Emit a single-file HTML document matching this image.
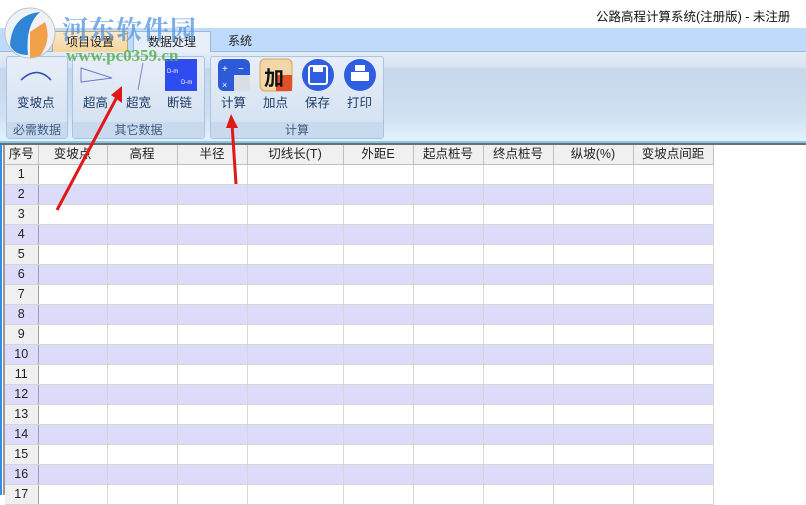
<!DOCTYPE html>
<html><head><meta charset="utf-8"><style>
*{margin:0;padding:0;box-sizing:border-box}
body{width:806px;height:495px;overflow:hidden;background:#fff;position:relative;font-family:"Liberation Sans","Noto Sans CJK SC",sans-serif;font-size:12px;color:#222}
.abs{position:absolute}
#title{left:0;top:0;width:806px;height:28px;background:#fff}
#tabs{left:0;top:28px;width:806px;height:24px;background:#bedbfc;border-bottom:1px solid #9bb8dc}
.tab{position:absolute;top:3px;height:22px;text-align:center;line-height:20px;font-size:12px}
#ribbon{left:0;top:52px;width:806px;height:91px;background:linear-gradient(#e4ecf7 0,#d8e4f3 15px,#c6d7ec 17px,#cddff0 60px,#e2f2fd 88px);border-bottom:2px solid #88c8ea}
.grp{position:absolute;top:56px;height:83px;border:1px solid #a9c4e4;border-radius:3px;background:linear-gradient(#e8eef8,#d1e0f1)}
.gl{position:absolute;left:0;right:0;bottom:0;height:16px;text-align:center;color:#3c5a80;font-size:12px;line-height:16px;background:#c9daef}
.btn{position:absolute;top:92px;font-size:12.5px;color:#1e3a66}
#grid{left:5px;top:145px}
table{border-collapse:collapse;table-layout:fixed}
td{height:20px;line-height:18px;border-right:1px solid #d6d6d6;border-bottom:1px solid #d6d6d6;text-align:center;font-size:12.5px;padding:0}
tr.h td{height:19px;background:#f0f0f0;border-right:1px solid #bfbfbf;border-bottom:1px solid #bfbfbf}
tr.e td{background:#dcdcfa}
td.rh{background:#f0f0f0;border-right:1px solid #a0a0a0}
tr.e td.rh{background:#dcdcfa}
</style></head><body>
<div id="title" class="abs"><span class="abs" style="left:596px;top:6px;font-size:12.5px;color:#111">公路高程计算系统(注册版) - 未注册</span></div>
<div id="tabs" class="abs">
<div class="tab" style="left:52px;width:76px;background:linear-gradient(#fde9c8,#f3d49b);border:1px solid #c8a66a;border-bottom:none">项目设置</div>
<div class="tab" style="left:133px;width:78px;background:#e6eef9;border:1px solid #9bb8dc;border-bottom:none;height:23px">数据处理</div>
<div class="tab" style="left:215px;width:50px">系统</div>
</div>
<div id="ribbon" class="abs"></div>
<div class="grp" style="left:6px;width:62px"><div class="gl">必需数据</div></div>
<div class="grp" style="left:72px;width:133px"><div class="gl">其它数据</div></div>
<div class="grp" style="left:210px;width:174px"><div class="gl">计算</div></div>
<svg class="abs" style="left:0;top:0" width="400" height="140">
<path d="M21 80 Q37 65 51 80" stroke="#2b4fb8" stroke-width="1.5" fill="none"/>
<path d="M81 68 L112 78 L81 82 Z" stroke="#6a7ccc" fill="none"/>
<path d="M143 63 L138 90" stroke="#7a88cc"/>
<rect x="165" y="59" width="32" height="32" fill="#2f4cf0"/>
<text x="167" y="73" font-size="6" fill="#fff">D-m</text><text x="181" y="84" font-size="6" fill="#fff">D-m</text>
<rect x="218" y="59" width="32" height="32" rx="6" fill="#2d5ad6"/>
<rect x="234" y="75" width="16" height="16" fill="#d8dde6"/>
<text x="222" y="72" font-size="10" fill="#fff">+</text><text x="238" y="72" font-size="10" fill="#fff">−</text><text x="222" y="88" font-size="9" fill="#fff">×</text>
<rect x="260" y="59" width="32" height="32" rx="5" fill="#f2d8a8" stroke="#d9a45a"/>
<rect x="276" y="75" width="16" height="16" fill="#e0502a"/>
<text x="264" y="85" font-size="20" font-weight="bold" fill="#111" font-family="Noto Sans CJK SC,sans-serif">加</text>
<circle cx="318" cy="75" r="16" fill="#2f5fe0"/><rect x="309" y="66" width="18" height="18" rx="2" fill="none" stroke="#fff" stroke-width="2"/><rect x="313" y="66" width="10" height="6" fill="#fff"/>
<circle cx="360" cy="75" r="16" fill="#2f5fe0"/><rect x="351" y="72" width="18" height="9" fill="#fff"/><rect x="355" y="65" width="10" height="6" fill="#fff"/>
</svg>
<span class="btn" style="left:17px">变坡点</span>
<span class="btn" style="left:83px">超高</span><span class="btn" style="left:126px">超宽</span><span class="btn" style="left:167px">断链</span>
<span class="btn" style="left:221px">计算</span><span class="btn" style="left:263px">加点</span><span class="btn" style="left:305px">保存</span><span class="btn" style="left:347px">打印</span>
<div class="abs" style="left:0;top:143px;width:806px;height:2px;background:#6e6e6e"></div>
<div class="abs" style="left:0;top:145px;width:2px;height:350px;background:#3a8be0"></div>
<div class="abs" style="left:3px;top:145px;width:2px;height:350px;background:#9a9a9a"></div>
<div id="grid" class="abs"><table>
<colgroup><col style="width:33px"><col style="width:69px"><col style="width:70px"><col style="width:70px"><col style="width:96px"><col style="width:70px"><col style="width:70px"><col style="width:70px"><col style="width:80px"><col style="width:80px"></colgroup>
<tr class="h"><td>序号</td><td>变坡点</td><td>高程</td><td>半径</td><td>切线长(T)</td><td>外距E</td><td>起点桩号</td><td>终点桩号</td><td>纵坡(%)</td><td>变坡点间距</td></tr>
<tr><td class="rh">1</td><td></td><td></td><td></td><td></td><td></td><td></td><td></td><td></td><td></td></tr>
<tr class="e"><td class="rh">2</td><td></td><td></td><td></td><td></td><td></td><td></td><td></td><td></td><td></td></tr>
<tr><td class="rh">3</td><td></td><td></td><td></td><td></td><td></td><td></td><td></td><td></td><td></td></tr>
<tr class="e"><td class="rh">4</td><td></td><td></td><td></td><td></td><td></td><td></td><td></td><td></td><td></td></tr>
<tr><td class="rh">5</td><td></td><td></td><td></td><td></td><td></td><td></td><td></td><td></td><td></td></tr>
<tr class="e"><td class="rh">6</td><td></td><td></td><td></td><td></td><td></td><td></td><td></td><td></td><td></td></tr>
<tr><td class="rh">7</td><td></td><td></td><td></td><td></td><td></td><td></td><td></td><td></td><td></td></tr>
<tr class="e"><td class="rh">8</td><td></td><td></td><td></td><td></td><td></td><td></td><td></td><td></td><td></td></tr>
<tr><td class="rh">9</td><td></td><td></td><td></td><td></td><td></td><td></td><td></td><td></td><td></td></tr>
<tr class="e"><td class="rh">10</td><td></td><td></td><td></td><td></td><td></td><td></td><td></td><td></td><td></td></tr>
<tr><td class="rh">11</td><td></td><td></td><td></td><td></td><td></td><td></td><td></td><td></td><td></td></tr>
<tr class="e"><td class="rh">12</td><td></td><td></td><td></td><td></td><td></td><td></td><td></td><td></td><td></td></tr>
<tr><td class="rh">13</td><td></td><td></td><td></td><td></td><td></td><td></td><td></td><td></td><td></td></tr>
<tr class="e"><td class="rh">14</td><td></td><td></td><td></td><td></td><td></td><td></td><td></td><td></td><td></td></tr>
<tr><td class="rh">15</td><td></td><td></td><td></td><td></td><td></td><td></td><td></td><td></td><td></td></tr>
<tr class="e"><td class="rh">16</td><td></td><td></td><td></td><td></td><td></td><td></td><td></td><td></td><td></td></tr>
<tr><td class="rh">17</td><td></td><td></td><td></td><td></td><td></td><td></td><td></td><td></td><td></td></tr>
</table></div>
<svg class="abs" style="left:0;top:0" width="400" height="230">
<circle cx="30" cy="33" r="25" fill="#eef2f6" stroke="#b8c4d0"/>
<path d="M10 45 Q12 15 40 12 Q25 25 28 55 Q14 55 10 45Z" fill="#2f86d6"/>
<path d="M30 58 L30 32 L45 22 Q52 40 40 56Z" fill="#f2a04a"/>
<path d="M57 210 L117 97" stroke="#e01818" stroke-width="3"/>
<path d="M111 95 L122 86 L122 103 Z" fill="#e01818"/>
<path d="M236 184 L232 124" stroke="#e01818" stroke-width="3"/>
<path d="M226 128 L231 114 L238 128 Z" fill="#e01818"/>
</svg>
<span class="abs" style="left:62px;top:10px;font-size:26px;font-weight:bold;color:#5b9be0;opacity:.8;font-family:'Noto Serif CJK SC',serif;letter-spacing:1px">河东软件园</span>
<span class="abs" style="left:66px;top:46px;font-size:17px;font-weight:bold;color:#58b04c;opacity:.85;font-family:'Liberation Serif',serif">www.pc0359.cn</span>
</body></html>
